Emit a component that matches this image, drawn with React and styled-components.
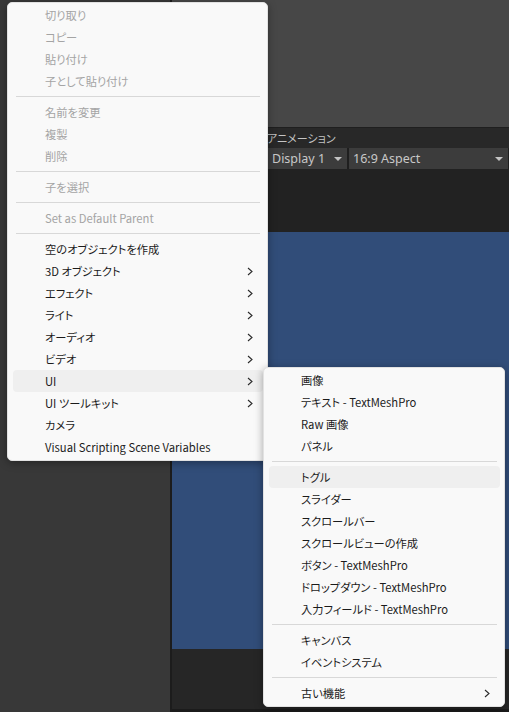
import React from 'react'
import styled, { createGlobalStyle } from 'styled-components'

const GlobalStyle = createGlobalStyle`
  html, body {
    margin: 0;
    padding: 0;
    background: #262626;
  }
  body {
    font-family: 'Noto Sans CJK JP', 'Noto Sans', sans-serif;
    font-feature-settings: 'palt';
  }
`

const Page = styled.div`
  position: relative;
  display: flex;
  width: 100%;
  height: 100vh;
  overflow: hidden;
`

const Hierarchy = styled.div`
  width: 170px;
  flex-shrink: 0;
  background: #383838;
  border-right: 2px solid #1c1c1c;
`

const SceneColumn = styled.div`
  flex: 1;
  display: flex;
  flex-direction: column;
  min-width: 0;
`

const SceneTop = styled.div`
  height: 127px;
  background: #474747;
  border-bottom: 1px solid #1f1f1f;
`

const TabStrip = styled.div`
  height: 20px;
  display: flex;
  align-items: center;
  padding-left: 95px;
  background: #282828;
  color: #c4c4c4;
  font-size: 11px;
`

const Toolbar = styled.div`
  height: 21px;
  display: flex;
  gap: 2px;
  padding: 0 1px 0 92px;
  background: #1f1f1f;
`

const Dropdown = styled.div`
  display: flex;
  align-items: center;
  justify-content: space-between;
  width: ${p => (p.grow ? 'auto' : '83px')};
  flex: ${p => (p.grow ? 1 : 'none')};
  box-sizing: border-box;
  padding: 0 5px 0 ${p => (p.grow ? '4px' : '8px')};
  background: #3c3c3c;
  color: #c8c8c8;
  font-family: 'Noto Sans', sans-serif;
  font-size: 12.5px;
`

const Caret = styled.span`
  width: 0;
  height: 0;
  border-left: 4px solid transparent;
  border-right: 4px solid transparent;
  border-top: 4px solid #c4c4c4;
`

const GameGap = styled.div`
  height: 63px;
  background: #222222;
`

const GameView = styled.div`
  height: 417px;
  background: #314d79;
`

const SceneBottom = styled.div`
  flex: 1;
  background: #262626;
  border-bottom: 3px solid #1b1b1b;
`

const Menu = styled.div`
  position: absolute;
  left: ${p => p.left}px;
  top: ${p => p.top}px;
  width: ${p => p.width}px;
  box-sizing: border-box;
  padding: 1px 0 2px;
  background: #f9f9f9;
  border: 1px solid #e2e2e2;
  border-radius: 5px;
  box-shadow: 0 2px 8px rgba(0, 0, 0, 0.35);
`

const Item = styled.div`
  height: 22px;
  display: flex;
  align-items: center;
  justify-content: space-between;
  margin: 0 4px 0 5px;
  padding: 0 10px 0 32px;
  border-radius: 4px;
  font-size: 11.25px;
  white-space: nowrap;
  color: ${p => (p.disabled ? '#a4a4a4' : '#1b1b1b')};
  background: ${p => (p.active ? '#efefef' : 'transparent')};
`

const Separator = styled.div`
  height: 9px;
  display: flex;
  align-items: center;
  margin: 0 7px 0 8px;

  &::after {
    content: '';
    flex: 1;
    height: 1px;
    background: #d8d8d8;
  }
`

const Chevron = () => (
  <svg width="6" height="9" viewBox="0 0 6 9">
    <path d="M1 1 L5 4.5 L1 8" fill="none" stroke="#2a2a2a" strokeWidth="1.1" />
  </svg>
)

const mainMenu = [
  { label: '切り取り', disabled: true },
  { label: 'コピー', disabled: true },
  { label: '貼り付け', disabled: true },
  { label: '子として貼り付け', disabled: true },
  '-',
  { label: '名前を変更', disabled: true },
  { label: '複製', disabled: true },
  { label: '削除', disabled: true },
  '-',
  { label: '子を選択', disabled: true },
  '-',
  { label: 'Set as Default Parent', disabled: true },
  '-',
  { label: '空のオブジェクトを作成' },
  { label: '3D オブジェクト', sub: true },
  { label: 'エフェクト', sub: true },
  { label: 'ライト', sub: true },
  { label: 'オーディオ', sub: true },
  { label: 'ビデオ', sub: true },
  { label: 'UI', sub: true, active: true },
  { label: 'UI ツールキット', sub: true },
  { label: 'カメラ' },
  { label: 'Visual Scripting Scene Variables' },
]

const uiMenu = [
  { label: '画像' },
  { label: 'テキスト - TextMeshPro' },
  { label: 'Raw 画像' },
  { label: 'パネル' },
  '-',
  { label: 'トグル', active: true },
  { label: 'スライダー' },
  { label: 'スクロールバー' },
  { label: 'スクロールビューの作成' },
  { label: 'ボタン - TextMeshPro' },
  { label: 'ドロップダウン - TextMeshPro' },
  { label: '入力フィールド - TextMeshPro' },
  '-',
  { label: 'キャンバス' },
  { label: 'イベントシステム' },
  '-',
  { label: '古い機能', sub: true },
]

const MenuList = ({ items, ...rest }) => (
  <Menu {...rest}>
    {items.map((item, i) =>
      item === '-' ? (
        <Separator key={i} />
      ) : (
        <Item key={i} disabled={item.disabled} active={item.active}>
          <span>{item.label}</span>
          {item.sub && <Chevron />}
        </Item>
      )
    )}
  </Menu>
)

const App = () => {
  return (
    <>
      <GlobalStyle />
      <Page>
        <Hierarchy />
        <SceneColumn>
          <SceneTop />
          <TabStrip>アニメーション</TabStrip>
          <Toolbar>
            <Dropdown>
              Display 1 <Caret />
            </Dropdown>
            <Dropdown grow>
              16:9 Aspect <Caret />
            </Dropdown>
          </Toolbar>
          <GameGap />
          <GameView />
          <SceneBottom />
        </SceneColumn>

        <MenuList items={mainMenu} left={7} top={2} width={261} />
        <MenuList items={uiMenu} left={263} top={367} width={242} />
      </Page>
    </>
  )
}

export default App
